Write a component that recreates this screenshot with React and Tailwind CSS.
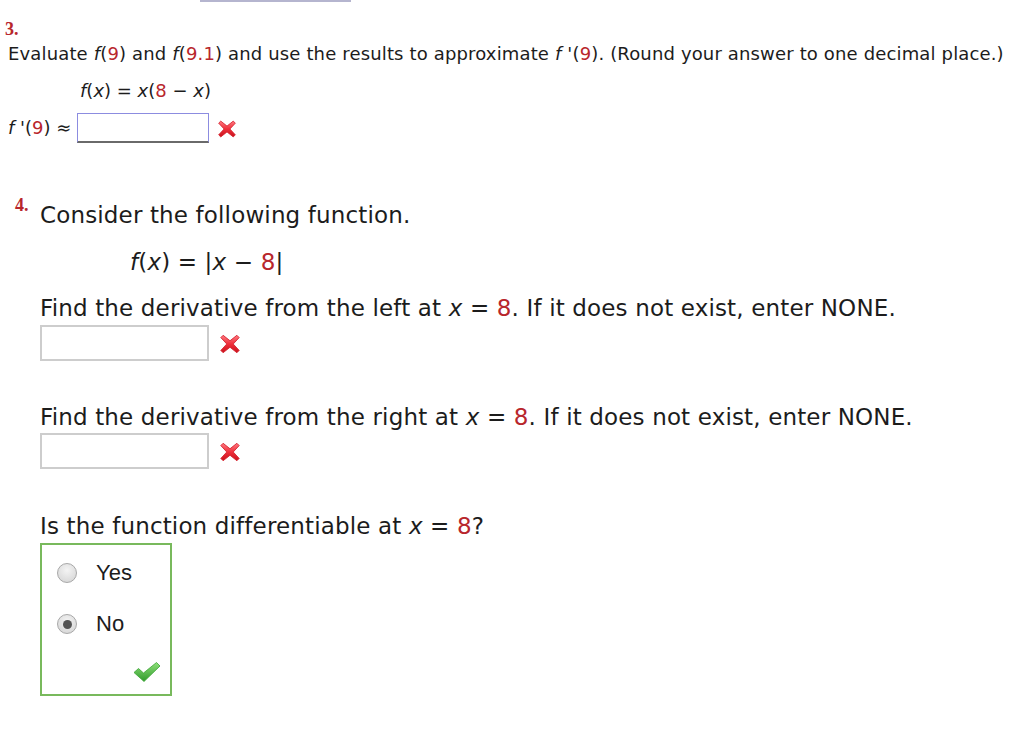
import React from "react";

const R = ({ children }) => <span className="text-[#b8262c]">{children}</span>;
const I = ({ children }) => <i className="italic">{children}</i>;

function XIcon({ w = 22, h = 22 }) {
  return (
    <svg width={w} height={h} viewBox="0 0 24 24">
      <defs>
        <linearGradient id="xg" x1="0" y1="0" x2="0" y2="1">
          <stop offset="0" stopColor="#ff7a82" />
          <stop offset="0.5" stopColor="#ef2f3a" />
          <stop offset="1" stopColor="#c8121c" />
        </linearGradient>
      </defs>
      <path
        d="M4.5 2.5 L12 8.5 L19.5 2.5 L22 5 L15.5 12 L22 19 L19.5 21.5 L12 15.5 L4.5 21.5 L2 19 L8.5 12 L2 5 Z"
        fill="url(#xg)"
        stroke="#d62430"
        strokeWidth="1"
        strokeLinejoin="round"
      />
    </svg>
  );
}

function Check() {
  return (
    <svg width="28" height="22" viewBox="0 0 28 22">
      <defs>
        <linearGradient id="cg" x1="0" y1="0" x2="0" y2="1">
          <stop offset="0" stopColor="#8fe07a" />
          <stop offset="1" stopColor="#2f9a2a" />
        </linearGradient>
      </defs>
      <path
        d="M1 11.5 L5.5 7.5 L10.5 12 L23.5 1.5 L27 5 L11 20.5 Z"
        fill="url(#cg)"
        stroke="#3aa534"
        strokeWidth="0.8"
        strokeLinejoin="round"
      />
    </svg>
  );
}

function Radio({ checked }) {
  return (
    <div className="w-[20px] h-[20px] rounded-full border border-[#a8a8a8] bg-[radial-gradient(circle_at_50%_35%,#f4f4f4,#d2d2d2)] flex items-center justify-center">
      {checked && <div className="w-[9px] h-[9px] rounded-full bg-[#555]" />}
    </div>
  );
}

export default function App() {
  return (
    <div className="w-[1024px] h-[754px] bg-white text-[#1c1c1c] font-['DejaVu_Sans',Verdana,sans-serif] overflow-hidden">
      <div className="ml-[200px] w-[151px] h-[2px] bg-[#b5b5cf]" />

      {/* Question 3 */}
      <div className="pl-[5px] mt-[19px] font-['Liberation_Serif',serif] font-bold text-[18px] leading-[17px] text-[#b8262c]">
        3.
      </div>
      <div className="pl-[8px] mt-[6px] text-[18px] tracking-[0.15px] leading-[20px] whitespace-nowrap">
        Evaluate <I>f</I>(<R>9</R>) and <I>f</I>(<R>9.1</R>) and use the results to approximate <I>f</I> '(<R>9</R>). (Round your answer to one decimal place.)
      </div>
      <div className="pl-[80px] mt-[17px] text-[18px] leading-[20px] whitespace-nowrap">
        <I>f</I>(<I>x</I>) = <I>x</I>(<R>8</R> − <I>x</I>)
      </div>
      <div className="pl-[8px] mt-[12px] flex items-center text-[18px] leading-[20px]">
        <span className="w-[69px] whitespace-nowrap">
          <I>f</I> '(<R>9</R>) ≈
        </span>
        <div className="w-[132px] h-[30px] border border-[#8c8ce0] border-b-2 border-b-[#6a6a6a] bg-white" />
        <div className="ml-[8px] mt-[2px]">
          <XIcon w={20} h={22} />
        </div>
      </div>

      {/* Question 4 */}
      <div className="mt-[54px] flex items-start">
        <div className="w-[40px] pl-[15px] font-['Liberation_Serif',serif] font-bold text-[18px] leading-[17px] text-[#b8262c]">
          4.
        </div>
        <div className="mt-[5px] text-[23px] tracking-[0.15px] leading-[26px] whitespace-nowrap">
          <div>Consider the following function.</div>
          <div className="mt-[21px] pl-[90px]">
            <I>f</I>(<I>x</I>) = |<I>x</I> − <R>8</R>|
          </div>
          <div className="mt-[20px]">
            Find the derivative from the left at <I>x</I> = <R>8</R>. If it does not exist, enter NONE.
          </div>
          <div className="mt-[4px] flex items-center">
            <div className="w-[169px] h-[36px] border-2 border-[#cdcdcd] bg-white" />
            <div className="ml-[9px] mt-[2px]">
              <XIcon w={24} h={22} />
            </div>
          </div>
          <div className="mt-[43px]">
            Find the derivative from the right at <I>x</I> = <R>8</R>. If it does not exist, enter NONE.
          </div>
          <div className="mt-[3px] flex items-center">
            <div className="w-[169px] h-[36px] border-2 border-[#cdcdcd] bg-white" />
            <div className="ml-[9px] mt-[2px]">
              <XIcon w={24} h={22} />
            </div>
          </div>
          <div className="mt-[44px]">
            Is the function differentiable at <I>x</I> = <R>8</R>?
          </div>
          <div className="mt-[4px] w-[132px] h-[153px] border-2 border-[#78b95c] flex flex-col font-['Liberation_Sans',Arial,sans-serif] text-[22px] tracking-normal">
            <div className="mt-[13px] h-[30px] pl-[15px] flex items-center">
              <Radio />
              <span className="ml-[19px]">Yes</span>
            </div>
            <div className="mt-[21px] h-[30px] pl-[15px] flex items-center">
              <Radio checked />
              <span className="ml-[19px]">No</span>
            </div>
            <div className="mt-[22px] pr-[9px] flex justify-end">
              <Check />
            </div>
          </div>
        </div>
      </div>
    </div>
  );
}
